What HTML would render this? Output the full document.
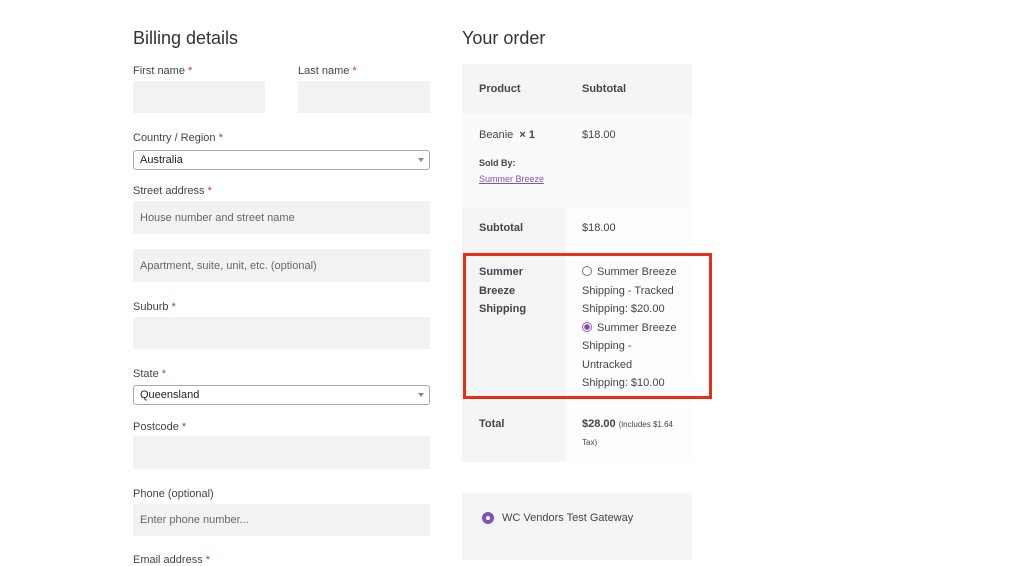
<!DOCTYPE html>
<html><head><meta charset="utf-8"><style>
*{margin:0;padding:0;box-sizing:border-box}
body{width:1024px;height:560px;overflow:hidden;background:#fff;font-family:"Liberation Sans",sans-serif;color:#43454b;position:relative}
.a{position:absolute;white-space:nowrap}
.lbl{font-size:11px;color:#43454b}
.lbl b{color:#c0392b;font-weight:normal}
.in{position:absolute;background:#f2f2f2;font-size:11px;color:#666;padding-left:7px;display:flex;align-items:center}
.sel{position:absolute;background:#fff;border:1px solid #aaa;border-radius:3px;font-size:11px;color:#222;padding-left:6px;display:flex;align-items:center}
.sel:after{content:"";position:absolute;right:5px;top:7px;border:3px solid transparent;border-top:4px solid #888}
.t{font-size:11px;color:#43454b}
.bd{font-weight:bold}
</style></head><body>
<div class="a" style="left:133px;top:28px;font-size:18px;color:#333">Billing details</div>
<div class="a" style="left:462px;top:28px;font-size:18px;color:#333">Your order</div>

<div class="a lbl" style="left:133px;top:65px">First name <b>*</b></div>
<div class="a lbl" style="left:298px;top:65px">Last name <b>*</b></div>
<div class="in" style="left:133px;top:81px;width:132px;height:32px"></div>
<div class="in" style="left:298px;top:81px;width:132px;height:32px"></div>
<div class="a lbl" style="left:133px;top:132px">Country / Region <b>*</b></div>
<div class="sel" style="left:133px;top:150px;width:297px;height:20px">Australia</div>
<div class="a lbl" style="left:133px;top:185px">Street address <b>*</b></div>
<div class="in" style="left:133px;top:201px;width:297px;height:33px">House number and street name</div>
<div class="in" style="left:133px;top:249px;width:297px;height:33px">Apartment, suite, unit, etc. (optional)</div>
<div class="a lbl" style="left:133px;top:301px">Suburb <b>*</b></div>
<div class="in" style="left:133px;top:317px;width:297px;height:32px"></div>
<div class="a lbl" style="left:133px;top:368px">State <b>*</b></div>
<div class="sel" style="left:133px;top:385px;width:297px;height:20px">Queensland</div>
<div class="a lbl" style="left:133px;top:421px">Postcode <b>*</b></div>
<div class="in" style="left:133px;top:436px;width:297px;height:33px"></div>
<div class="a lbl" style="left:133px;top:488px">Phone (optional)</div>
<div class="in" style="left:133px;top:504px;width:297px;height:32px">Enter phone number...</div>
<div class="a lbl" style="left:133px;top:554px">Email address <b>*</b></div>

<div class="a" style="left:462px;top:64px;width:230px;height:50px;background:#f5f5f5"></div>
<div class="a" style="left:462px;top:114px;width:230px;height:94px;background:#fafafa"></div>
<div class="a" style="left:462px;top:208px;width:104px;height:254px;background:#f5f5f5"></div>
<div class="a" style="left:566px;top:208px;width:126px;height:254px;background:#fdfdfd"></div>
<div class="a t bd" style="left:479px;top:83px">Product</div>
<div class="a t bd" style="left:582px;top:83px">Subtotal</div>
<div class="a t" style="left:479px;top:129px">Beanie &nbsp;<span class="bd">× 1</span></div>
<div class="a t" style="left:582px;top:129px">$18.00</div>
<div class="a bd" style="left:479px;top:158px;font-size:9px">Sold By:</div>
<div class="a" style="left:479px;top:174px;font-size:9px;color:#7f54b3;text-decoration:underline">Summer Breeze</div>
<div class="a t bd" style="left:479px;top:222px">Subtotal</div>
<div class="a t" style="left:582px;top:222px">$18.00</div>
<div class="a t bd" style="left:479px;top:263px;line-height:18.5px;white-space:normal;width:60px">Summer Breeze Shipping</div>
<div class="a t" style="left:582px;top:263px;line-height:18.5px;white-space:normal;width:96px">
<span style="display:inline-block;width:10px;height:10px;border:1px solid #777;border-radius:50%;vertical-align:-1px;margin-right:5px"></span>Summer Breeze Shipping - Tracked Shipping: $20.00<br>
<span style="display:inline-block;width:10px;height:10px;border:1px solid #9b59b6;border-radius:50%;vertical-align:-1px;margin-right:5px;background:radial-gradient(#8e44ad 0 2.5px,#fff 3px)"></span>Summer Breeze Shipping - Untracked Shipping: $10.00</div>
<div class="a" style="left:463px;top:253px;width:249px;height:146px;border:3px solid #ea2e15"></div>
<div class="a t bd" style="left:479px;top:418px">Total</div>
<div class="a t" style="left:582px;top:418px"><span class="bd">$28.00</span> <span style="font-size:8px">(includes $1.64</span></div>
<div class="a" style="left:582px;top:438px;font-size:8px">Tax)</div>

<div class="a" style="left:462px;top:493px;width:230px;height:67px;background:#f5f5f5"></div>
<div class="a" style="left:482px;top:512px;width:12px;height:12px;border-radius:50%;background:#7f54b3"></div>
<div class="a" style="left:486px;top:516px;width:4px;height:4px;border-radius:50%;background:#fff"></div>
<div class="a t" style="left:502px;top:512px">WC Vendors Test Gateway</div>
</body></html>
